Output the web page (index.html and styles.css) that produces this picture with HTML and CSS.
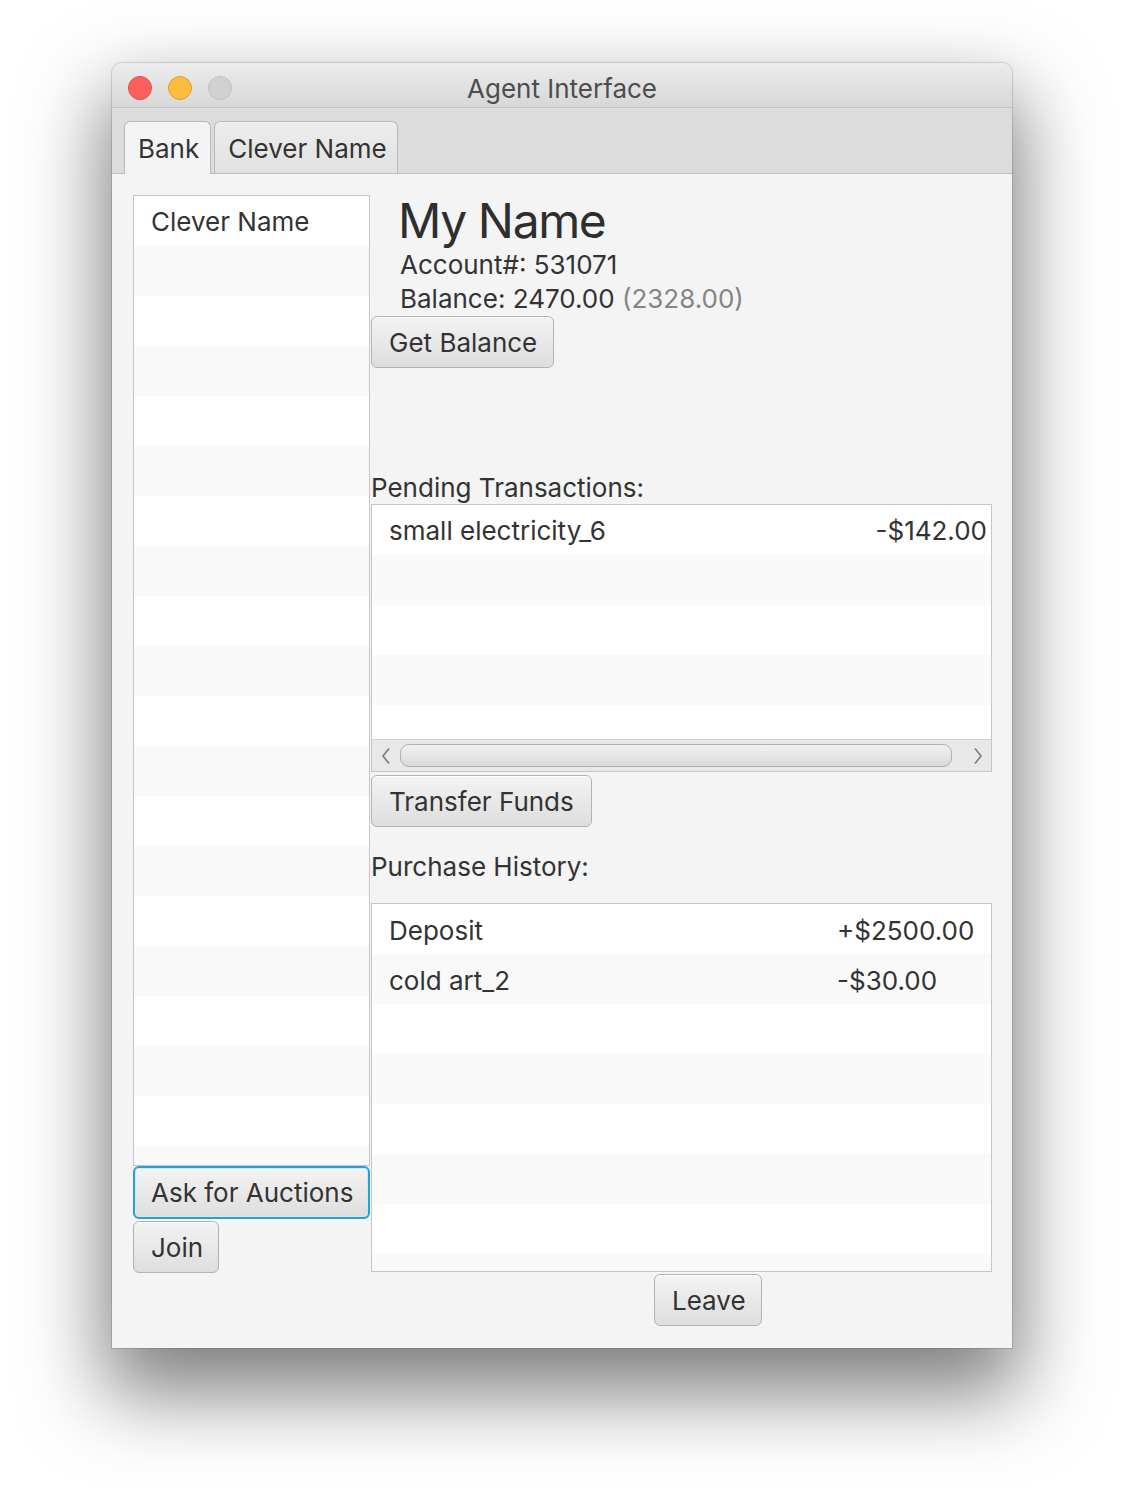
FILE: index.html
```html
<!DOCTYPE html>
<html>
<head>
<meta charset="utf-8">
<title>Agent Interface</title>
<link rel="stylesheet" href="styles.css">
</head>
<body>
<div class="stage">
  <div class="window">
    <div class="titlebar">
      <div class="lights">
        <span class="light red"></span>
        <span class="light yellow"></span>
        <span class="light gray"></span>
      </div>
      <div class="title">Agent Interface</div>
      <div class="spacer"></div>
    </div>
    <div class="tabs">
      <div class="tab active">Bank</div>
      <div class="tab">Clever Name</div>
    </div>
    <div class="content">
      <div class="left">
        <div class="list">
          <div class="cell">Clever Name</div>
        </div>
        <button class="btn focus ask">Ask for Auctions</button>
        <button class="btn join">Join</button>
      </div>
      <div class="right">
        <div class="name">My Name</div>
        <div class="info first">Account#: 531071</div>
        <div class="info">Balance: 2470.00 <span class="muted">(2328.00)</span></div>
        <button class="btn getbal">Get Balance</button>
        <div class="label pending">Pending Transactions:</div>
        <div class="table t1">
          <div class="viewport">
            <div class="trow"><span>small electricity_6</span><span class="amt">-$142.00</span></div>
          </div>
          <div class="hscroll">
            <div class="arrow">
              <svg width="10" height="18" viewBox="0 0 10 18"><path d="M8 1.5 L2 9 L8 16.5" fill="none" stroke="#7b7b7b" stroke-width="1.6"/></svg>
            </div>
            <div class="thumb"></div>
            <div class="arrow">
              <svg width="10" height="18" viewBox="0 0 10 18"><path d="M2 1.5 L8 9 L2 16.5" fill="none" stroke="#7b7b7b" stroke-width="1.6"/></svg>
            </div>
          </div>
        </div>
        <button class="btn transfer">Transfer Funds</button>
        <div class="label history">Purchase History:</div>
        <div class="table t2">
          <div class="hrow"><span>Deposit</span><span>+$2500.00</span></div>
          <div class="hrow"><span>cold art_2</span><span>-$30.00</span></div>
        </div>
        <button class="btn leave">Leave</button>
      </div>
    </div>
  </div>
</div>
</body>
</html>
```
FILE: styles.css
```css
* { box-sizing: border-box; }
html, body { margin: 0; padding: 0; background: #ffffff; }
body {
  font-family: Inter, "Liberation Sans", Arial, sans-serif;
  color: #333333;
  width: 1124px;
  height: 1508px;
  overflow: hidden;
}
.stage {
  padding: 63px 0 0 112px;
}
.window {
  width: 900px;
  height: 1285px;
  background: #f4f4f4;
  border-radius: 10px 10px 0 0;
  box-shadow: 0 38px 80px 8px rgba(0,0,0,0.5), 0 0 0 1px rgba(0,0,0,0.13);
  overflow: hidden;
  display: flex;
  flex-direction: column;
}
.titlebar {
  height: 45px;
  flex: none;
  display: grid;
  grid-template-columns: 1fr auto 1fr;
  align-items: center;
  background: linear-gradient(#ececec, #d7d7d7);
  border-bottom: 1px solid #c2c2c2;
}
.lights {
  display: flex;
  gap: 16px;
  padding-left: 16px;
  padding-top: 1px;
}
.light {
  width: 24px;
  height: 24px;
  border-radius: 50%;
  display: block;
}
.light.red { background: #fc605c; border: 1px solid #de4a45; }
.light.yellow { background: #fdbc40; border: 1px solid #dea035; }
.light.gray { background: #d1d1d1; border: 1px solid #bfbfbf; }
.title {
  font-size: 26px;
  color: #4d4d4d;
  line-height: 44px;
  padding-top: 4px;
}
.tabs {
  height: 66px;
  flex: none;
  display: flex;
  align-items: flex-start;
  gap: 3px;
  padding: 13px 0 0 12px;
  background: linear-gradient(#bdbdbd, #bdbdbd) left bottom / 100% 1px no-repeat, #dcdcdc;
}
.tab {
  height: 52px;
  line-height: 50px;
  padding: 2px 10px 0 13px;
  font-size: 26px;
  border: 1px solid #b9b9b9;
  border-bottom: none;
  border-radius: 6px 6px 0 0;
  background: linear-gradient(#ededed, #e1e1e1);
  color: #333;
}
.tab.active {
  height: 53px;
  background: #f4f4f4;
  padding-right: 11px;
}
.content {
  flex: 1;
  display: flex;
  gap: 1px;
  padding: 21px 20px 0 21px;
}
.left {
  width: 237px;
  flex: none;
  display: flex;
  flex-direction: column;
  align-items: flex-start;
}
.list {
  width: 237px;
  height: 971px;
  border: 1px solid #c6c6c6;
  background: repeating-linear-gradient(#ffffff 0 50px, #f9f9f9 50px 100px);
}
.cell {
  height: 50px;
  line-height: 50px;
  padding-top: 1px;
  font-size: 26px;
  padding-left: 17px;
}
.btn {
  font-family: inherit;
  font-size: 26px;
  color: #333;
  height: 52px;
  padding: 2px 0 0 17px;
  text-align: left;
  border: 1px solid #b3b3b3;
  border-radius: 6px;
  background: linear-gradient(#f3f3f3, #dedede);
  box-shadow: inset 0 1px 0 rgba(255,255,255,0.8);
  flex: none;
  display: block;
  line-height: 48px;
}
.btn.ask {
  width: 237px;
  height: 53px;
  border: 2px solid #2a9fd6;
  box-shadow: inset 0 0 0 1px #cfe8f4;
  padding-left: 16px;
  padding-top: 1px;
}
.btn.join { width: 86px; margin-top: 2px; }
.right {
  width: 621px;
  flex: none;
  display: flex;
  flex-direction: column;
  align-items: flex-start;
}
.name {
  font-size: 48px;
  line-height: 50px;
  padding-top: 1px;
  height: 50px;
  letter-spacing: -1.4px;
  padding-left: 27px;
  color: #2e2e2e;
}
.info {
  font-size: 26px;
  line-height: 34px;
  padding-left: 29px;
}
.info.first { margin-top: 3px; }
.muted { color: #858585; }
.btn.getbal { width: 183px; margin-top: 0; }
.label {
  font-size: 26px;
  line-height: 34px;
  height: 34px;
  padding-left: 0;
}
.label.pending { margin-top: 100px; padding-top: 3px; }
.label.history { padding-top: 1px; }
.table {
  width: 621px;
  border: 1px solid #c6c6c6;
  background: repeating-linear-gradient(#ffffff 0 50px, #f9f9f9 50px 100px);
  margin-top: 2px;
}
.t1 {
  height: 268px;
  display: flex;
  flex-direction: column;
}
.viewport {
  flex: 1;
}
.trow {
  height: 50px;
  line-height: 50px;
  padding: 1px 4px 0 17px;
  font-size: 26px;
  display: flex;
  justify-content: space-between;
}
.hscroll {
  height: 32px;
  flex: none;
  display: flex;
  align-items: center;
  background: #e8e8e8;
  border-top: 1px solid #d2d2d2;
}
.arrow {
  width: 27px;
  height: 100%;
  display: flex;
  align-items: center;
  justify-content: center;
  flex: none;
}
.thumb {
  flex: 1;
  height: 23px;
  margin: 0 12px 0 1px;
  border: 1px solid #aeaeae;
  border-radius: 9px;
  background: linear-gradient(#f1f1f1, #dadada);
}
.btn.transfer { width: 221px; margin-top: 3px; }
.label.history { margin-top: 22px; }
.t2 {
  height: 369px;
  margin-top: 20px;
}
.hrow {
  height: 50px;
  line-height: 50px;
  padding-top: 2px;
  font-size: 26px;
  display: grid;
  grid-template-columns: 1fr 154px;
  padding-left: 17px;
}
.btn.leave {
  width: 108px;
  margin-top: 2px;
  margin-left: 283px;
}
```
